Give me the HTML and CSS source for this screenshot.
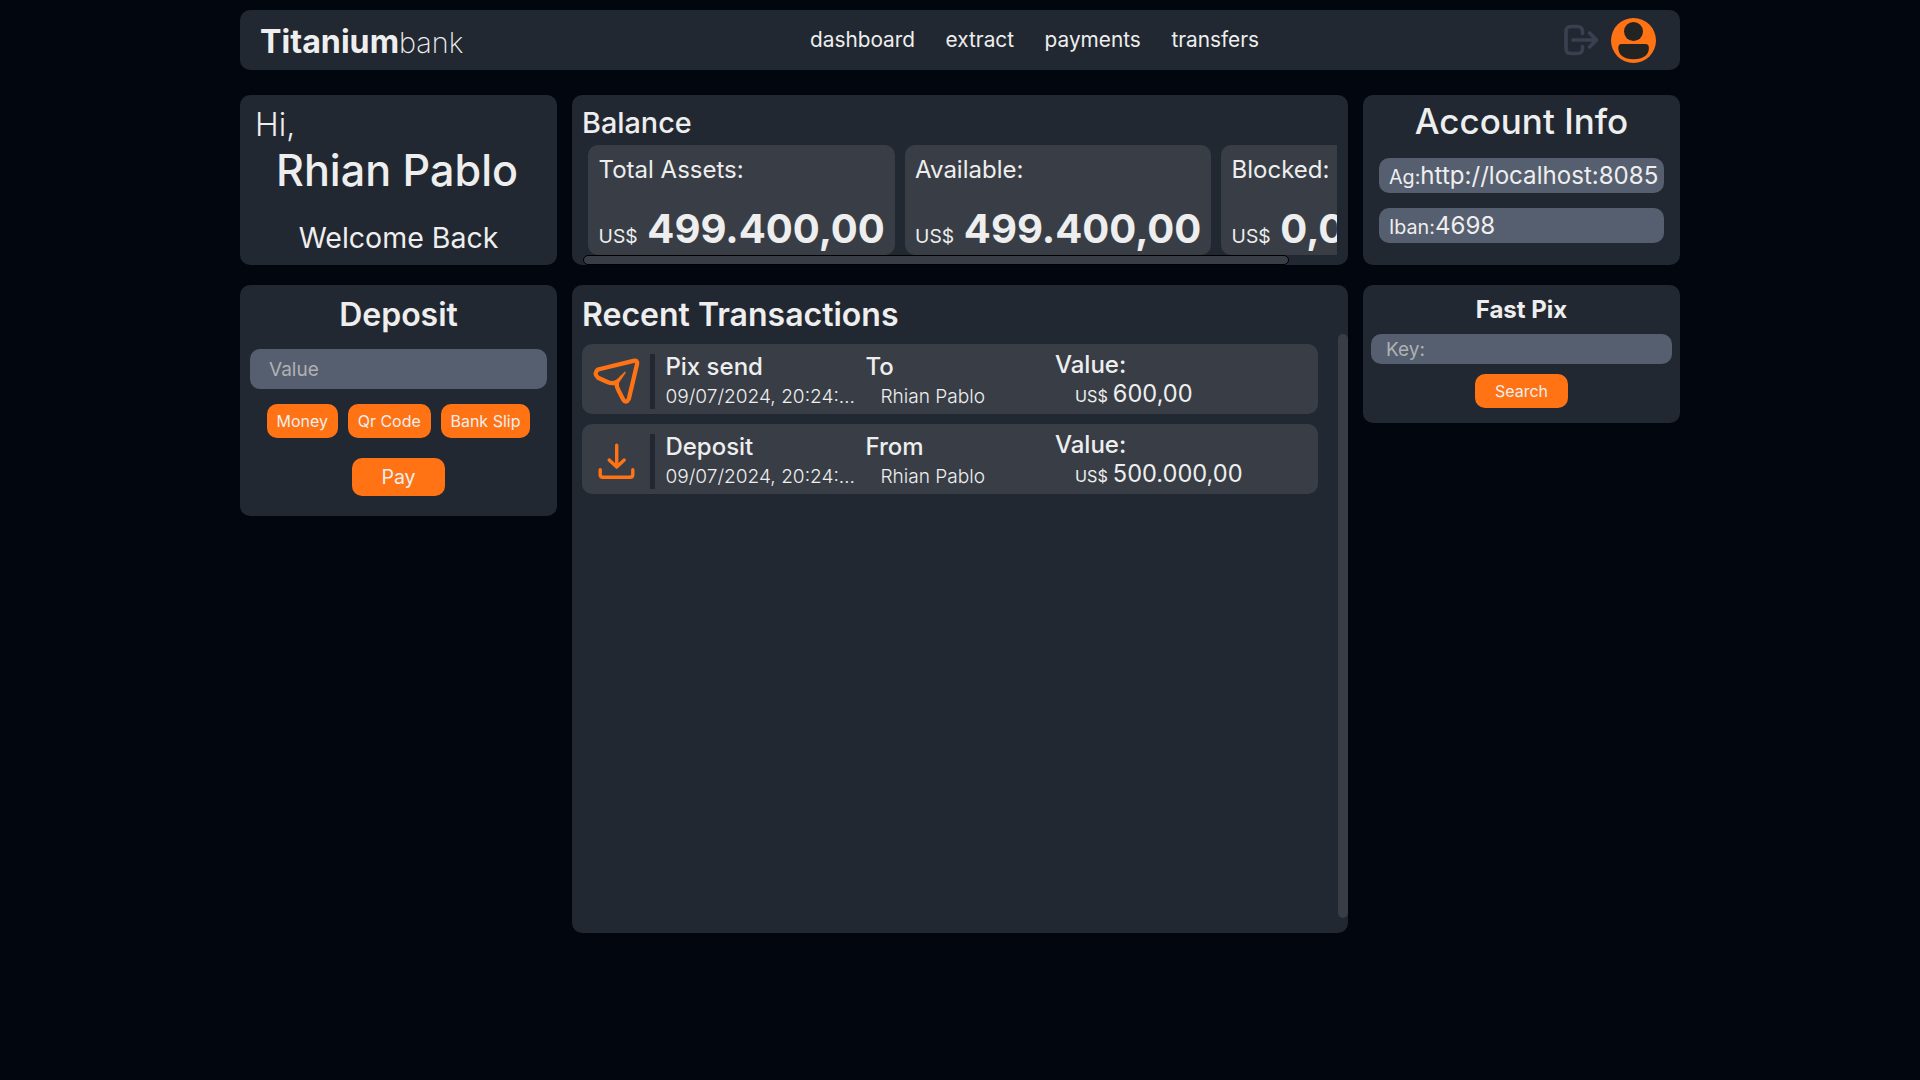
FILE: index.html
```html
<!DOCTYPE html>
<html lang="en">
<head>
<meta charset="utf-8">
<title>Titanium bank</title>
<link rel="stylesheet" href="styles.css">
</head>
<body>
<div class="page">
  <header class="header">
    <div class="logo"><b>Titanium</b><span>bank</span></div>
    <nav class="nav"><a>dashboard</a><a>extract</a><a>payments</a><a>transfers</a></nav>
    <div class="user">
      <svg class="logout" viewBox="0 0 36 32" fill="none" stroke="#394150" stroke-width="3.6" stroke-linecap="round" stroke-linejoin="round"><path d="M19.5 9.5V7.5Q19.5 2.5 14.5 2.5H8Q3 2.5 3 7.5V24.5Q3 29.5 8 29.5H14.5Q19.5 29.5 19.5 24.5V22.5"/><path d="M10 16H33.5M26.5 9L33.5 16L26.5 23"/></svg>
      <svg class="avatar" viewBox="0 0 45 45"><circle cx="22.5" cy="22.5" r="22.5" fill="#ff7315"/><circle cx="22.5" cy="13.5" r="9.5" fill="#232323"/><path d="M10.5 26H34.5Q37.9 26 37.9 30C37.9 37 32 41.3 22.5 41.3S7.3 37 7.3 30Q7.3 26 10.5 26Z" fill="#232323"/></svg>
    </div>
  </header>
  <main class="grid">
    <section class="card hello">
      <p class="hi">Hi,</p>
      <h1 class="name">Rhian Pablo</h1>
      <p class="welcome">Welcome Back</p>
    </section>
    <section class="card balance">
      <h2 class="balance-title">Balance</h2>
      <div class="tiles">
        <div class="tile"><p class="tile-label">Total Assets:</p><p class="amount"><span>US$</span><b>499.400,00</b></p></div>
        <div class="tile"><p class="tile-label">Available:</p><p class="amount"><span>US$</span><b>499.400,00</b></p></div>
        <div class="tile"><p class="tile-label">Blocked:</p><p class="amount"><span>US$</span><b>0,00</b></p></div>
      </div>
      <div class="hbar"></div>
    </section>
    <section class="card account">
      <h2 class="account-title">Account Info</h2>
      <p class="field">Ag:<span>http://localhost:8085</span></p>
      <p class="field">Iban:<span>4698</span></p>
    </section>
    <section class="card deposit">
      <h2 class="deposit-title">Deposit</h2>
      <input class="input" type="text" placeholder="Value">
      <div class="methods"><button class="btn">Money</button><button class="btn">Qr Code</button><button class="btn">Bank Slip</button></div>
      <button class="btn pay">Pay</button>
    </section>
    <section class="card recent">
      <h2 class="recent-title">Recent Transactions</h2>
      <div class="scroll">
        <div class="list">
          <article class="row">
            <div class="icon"><svg viewBox="0 0 50 50" fill="none" stroke="#ff7315" stroke-width="4.3" stroke-linecap="round" stroke-linejoin="round"><path d="M6 14.5L41.5 5.8Q46 5 45 9.3L36.8 44Q34 49 31.2 44.5L26.3 35Q24.3 31.5 24.8 27Q20.5 29.2 16 27.3L6 22.7Q1.2 18.5 6 14.5Z"/><path d="M23.2 26.2L33 16.8L33.6 17.6L26.3 28.3Z" fill="#ff7315" stroke-width="0.6"/></svg></div>
            <div class="what"><h3>Pix send</h3><p>09/07/2024, 20:24:00</p></div>
            <div class="who"><h3>To</h3><p>Rhian Pablo</p></div>
            <div class="value"><h3>Value:</h3><p><span>US$</span>600,00</p></div>
          </article>
          <article class="row">
            <div class="icon"><svg viewBox="0 0 50 50" fill="none" stroke="#ff7315" stroke-width="3.4" stroke-linecap="round" stroke-linejoin="round"><path d="M24.7 10.3V31.5M17.2 25L24.7 32L32.2 25M8.2 34.8V39.5Q8.2 42.3 11 42.3H38Q40.8 42.3 40.8 39.5V34.8"/></svg></div>
            <div class="what"><h3>Deposit</h3><p>09/07/2024, 20:24:00</p></div>
            <div class="who"><h3>From</h3><p>Rhian Pablo</p></div>
            <div class="value"><h3>Value:</h3><p><span>US$</span>500.000,00</p></div>
          </article>
        </div>
        <div class="vbar"></div>
      </div>
    </section>
    <section class="card pix">
      <h2 class="pix-title">Fast Pix</h2>
      <input class="input key" type="text" placeholder="Key:">
      <button class="btn search">Search</button>
    </section>
  </main>
</div>
</body>
</html>
```

FILE: styles.css
```css
* { margin: 0; padding: 0; box-sizing: border-box; }
body { background: #02060f; color: #eee; font-family: Inter, "Liberation Sans", sans-serif; height: 1080px; overflow: hidden; }
.page { width: 1440px; margin: 0 auto; padding-top: 10px; }
.card, .header { background: #222831; border-radius: 10px; }
.header { height: 60px; display: grid; grid-template-columns: 550px auto 1fr; align-items: center; padding: 0 24px 0 20px; }
.logo { font-size: 32.2px; line-height: 40px; padding-top: 4px; }
.logo b { font-weight: 700; }
.logo span { font-size: 28.8px; font-weight: 200; }
.nav { display: flex; gap: 30.6px; font-size: 20.8px; line-height: 26px; }
.user { display: flex; justify-content: flex-end; align-items: center; gap: 12px; }
.logout { width: 36px; height: 32px; }
.avatar { width: 45px; height: 45px; }
.grid { display: grid; grid-template-columns: 317px 776px 317px; column-gap: 15px; row-gap: 20px; margin-top: 25px; align-items: start; grid-template-rows: 170px auto; }
.hello { height: 170px; padding: 10px 15px 0; }
.hi { font-size: 32px; font-weight: 300; line-height: 39px; }
.name { font-size: 43.1px; font-weight: 500; line-height: 53px; text-align: center; margin-left: -3px; }
.welcome { font-size: 28.5px; line-height: 36px; text-align: center; margin-top: 23px; }
.balance { height: 170px; padding: 10px 11px 0; display: flex; flex-direction: column; }
.balance-title { font-size: 28.8px; font-weight: 500; line-height: 35px; height: 40px; margin-left: -1px; }
.tiles { display: flex; gap: 10px; overflow: hidden; padding-left: 5px; height: 110px; }
.tile { flex: none; width: 306.5px; height: 110px; background: #393e46; border-radius: 10px; padding: 10px 10px 0 10.6px; }
.tile-label { font-size: 24px; line-height: 30px; }
.amount { display: flex; align-items: baseline; gap: 9.6px; line-height: 50px; margin-top: 19px; }
.amount span { font-size: 19.3px; }
.amount b { font-size: 40.1px; font-weight: 700; }
.hbar { width: 706px; height: 10px; background: #393e46; border: 1px solid #000; border-radius: 10px; }
.account { height: 170px; padding: 5px 16px 0; }
.account-title { font-size: 35px; font-weight: 500; line-height: 43px; text-align: center; margin-bottom: 15px; }
.field { background: #565f6f; height: 35px; border-radius: 10px; padding-left: 10px; font-size: 19.7px; line-height: 35px; margin-bottom: 15px; white-space: nowrap; }
.field span { font-size: 24.1px; }
.deposit { height: 231px; padding: 10px; display: flex; flex-direction: column; align-items: center; }
.deposit-title { font-size: 32px; font-weight: 600; line-height: 39px; margin-bottom: 15px; }
.input { display: block; width: 100%; height: 40px; border: 0; border-radius: 10px; background: #565f6f; color: #eee; font: 400 19px Inter, sans-serif; padding: 0 19px; }
.input::placeholder { color: #b0b1b3; opacity: 1; }
.methods { display: flex; gap: 10px; margin: 15px 0 20px; }
.btn { border: 0; border-radius: 10px; background: #ff7315; color: #eee; font: 400 16px Inter, sans-serif; height: 34px; padding: 0 9.8px; }
.pay { width: 93px; height: 38px; font-size: 19.6px; }
.recent { height: 648px; display: flex; flex-direction: column; }
.recent-title { font-size: 32px; font-weight: 600; line-height: 39px; padding: 10px 10px 0; }
.scroll { display: flex; justify-content: space-between; }
.list { padding: 10px 0 0 10px; }
.row { height: 70px; width: 736px; background: #393e46; border-radius: 10px; display: grid; grid-template-columns: 73px 200px 190px 1fr; margin-bottom: 10px; }
.icon { height: 55px; margin-top: 10px; border-right: 5px solid #222831; padding: 1px 0 0 10px; }
.icon svg { width: 50px; height: 50px; }
.row h3 { font-size: 24px; font-weight: 500; line-height: 30px; }
.what, .who { padding: 8px 0 0 10.4px; }
.what p, .who p { font-size: 19.1px; font-weight: 300; line-height: 24px; margin-top: 2px; white-space: nowrap; overflow: hidden; text-overflow: ellipsis; }
.what p { margin-right: -3px; }
.who p { padding-left: 15px; }
.value { padding: 6px 0 0 10px; }
.value p { font-size: 23.6px; line-height: 30px; padding-left: 20px; margin-top: -1px; }
.value span { font-size: 16.2px; margin-right: 5px; }
.vbar { width: 10px; height: 584px; background: #393e46; border-radius: 5px; }
.pix { height: 138px; padding: 10px 8px; display: flex; flex-direction: column; align-items: center; }
.pix-title { font-size: 24px; font-weight: 700; line-height: 29px; margin-bottom: 10px; }
.key { height: 30px; padding: 0 15px; }
.search { width: 93px; margin-top: 10px; }
```
